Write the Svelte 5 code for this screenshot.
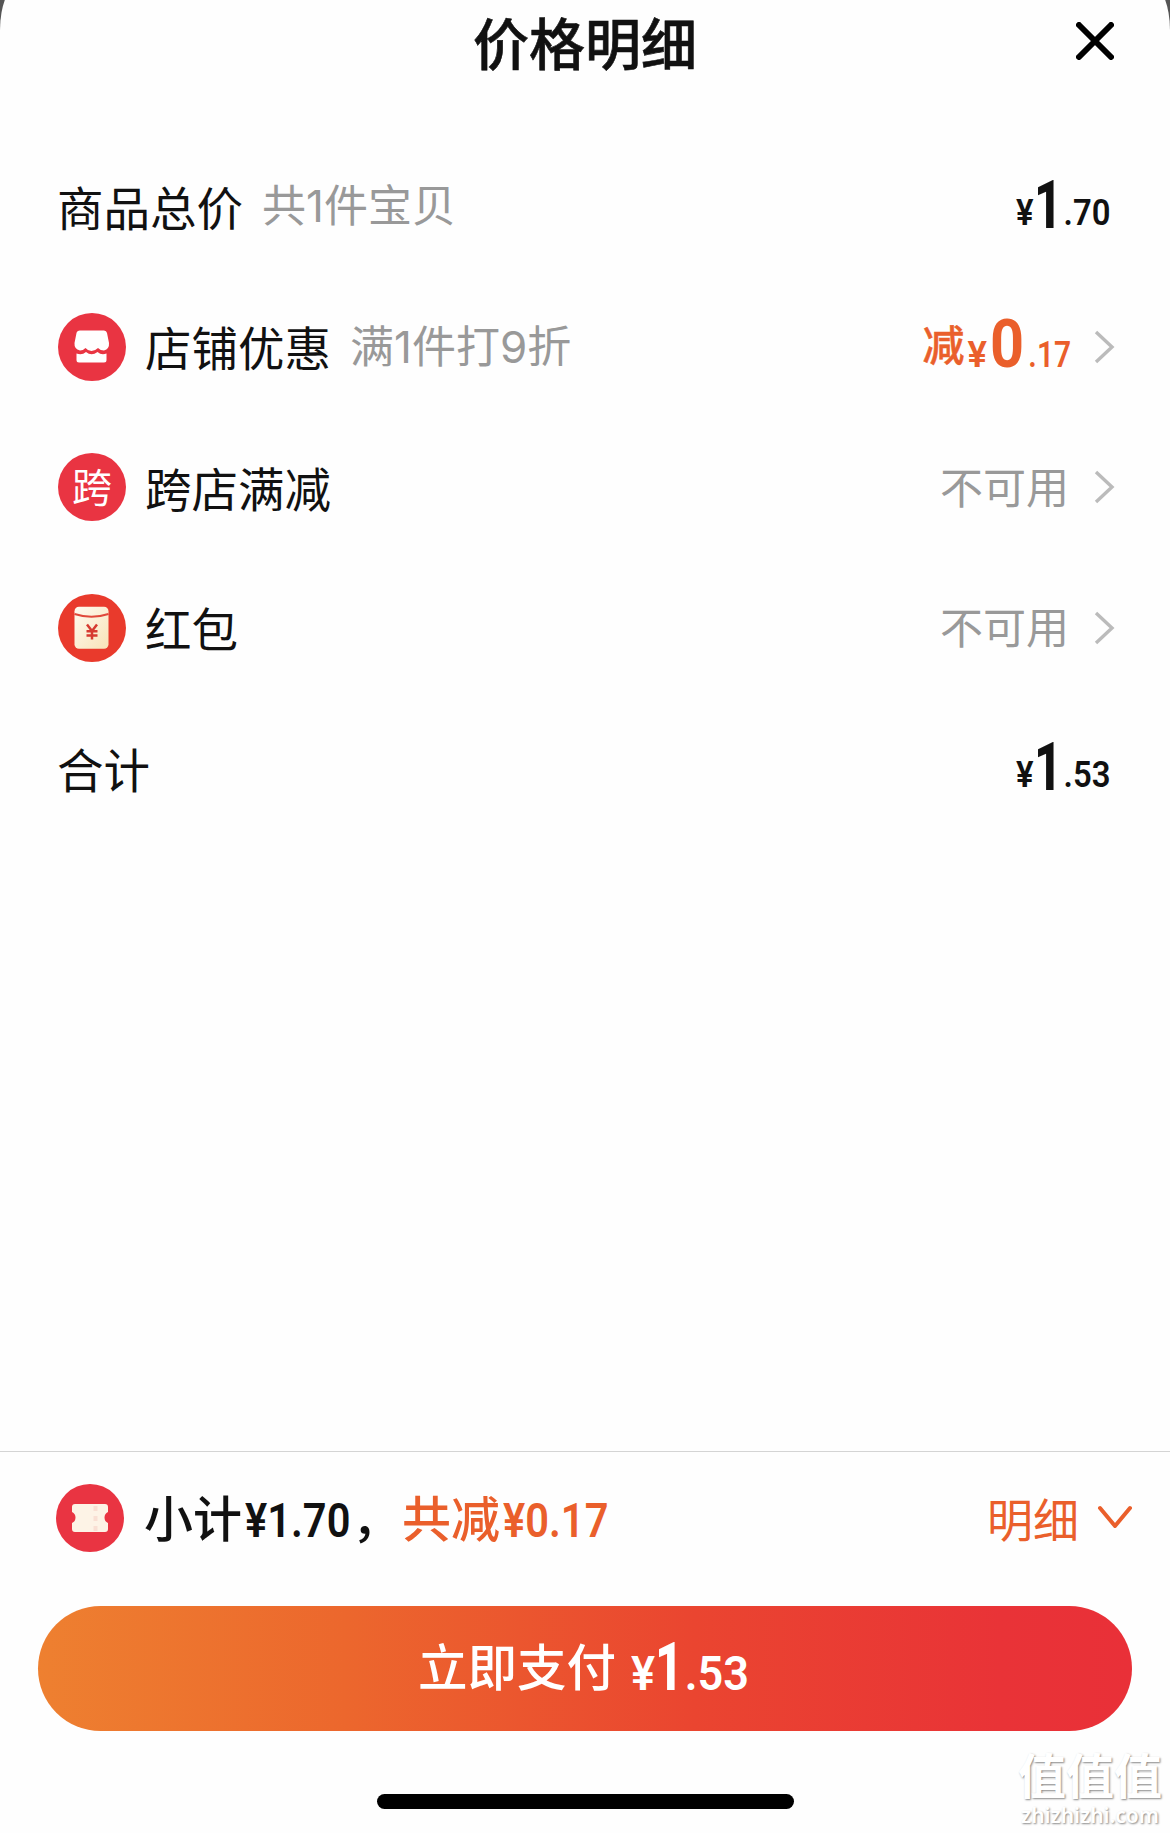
<script>
  const rows = [
    { label: '商品总价', note: '共1件宝贝', int: '1', dec: '.70' },
    { icon: 'shop', label: '店铺优惠', note: '满1件打9折', off: true, int: '0', dec: '.17' },
    { icon: 'cross', label: '跨店满减', status: '不可用' },
    { icon: 'packet', label: '红包', status: '不可用' },
    { label: '合计', int: '1', dec: '.53' },
  ]
</script>

{#snippet price(int, dec)}
  <span class="price">
    <span class="yen">¥</span>
    <span class="int" class:narrow={int === '1'}>{int}</span>
    <span class="dec">{dec}</span>
  </span>
{/snippet}

{#snippet icon(name)}
  <svg class="icon" viewBox="0 0 68 68">
    <defs>
      <linearGradient id="cream" x1="0" y1="0" x2="1" y2="1">
        <stop offset="0" stop-color="#fffaf0" />
        <stop offset="1" stop-color="#f8e3b8" />
      </linearGradient>
    </defs>
    <circle cx="34" cy="34" r="34" fill={name === 'packet' ? '#e93a2c' : '#e93442'} />
    {#if name === 'shop'}
      <path d="M22 17.500H46Q48.500 17.500 49 20L51 30Q51.500 36 46 37.500Q42.500 37.500 40 35Q37 38 33.500 38Q30 38 27.500 35Q25 37.500 22 37.500Q16 36 16.500 30L18.500 20Q19 17.500 22 17.500Z" fill="#fff" />
      <path d="M18.500 40.500Q24 42.500 28 39Q33.500 43.500 39.500 39Q43.500 42.500 48.500 40.500V47Q48.500 49.500 46 49.500H21Q18.500 49.500 18.500 47Z" fill="#fff" />
    {:else if name === 'cross'}
      <text class="glyph" x="34" y="48.500" text-anchor="middle">跨</text>
    {:else if name === 'packet'}
      <rect x="16.500" y="12.700" width="34" height="42" rx="4.500" fill="url(#cream)" />
      <path d="M16.500 20Q33.500 25.500 50.500 20" fill="none" stroke="#e0483a" stroke-width="2" />
      <path d="M29 30.500L34 37L39 30.500M34 37V45.500M28.500 37.300H39.500M28.500 41.500H39.500" fill="none" stroke="#d63a30" stroke-width="2.500" />
    {:else}
      <path d="M19 20H49Q52 20 52 23V28Q48.500 29.500 48.500 33.500Q48.500 37.500 52 39V45Q52 48 49 48H19Q16 48 16 45V39Q19.500 37.500 19.500 33.500Q19.500 29.500 16 28V23Q16 20 19 20Z" fill="#fdf3e6" />
      <path d="M39.500 22V47" stroke="#f9dfd3" stroke-width="4" stroke-dasharray="5 5" />
    {/if}
  </svg>
{/snippet}

<div class="page">
  <div class="sheet">
    <header>
      <h1>价格明细</h1>
      <button class="close" aria-label="关闭">
        <svg width="38" height="38" viewBox="0 0 38 38">
          <path d="M3 3L35 35M35 3L3 35" stroke="#000" stroke-width="6" stroke-linecap="round" />
        </svg>
      </button>
    </header>

    <ul>
      {#each rows as row}
        <li class:linked={row.icon}>
          {#if row.icon}
            {@render icon(row.icon)}
          {/if}
          <span class="label">{row.label}</span>
          {#if row.note}
            <span class="note">{row.note}</span>
          {/if}
          <div class="value" class:off={row.off}>
            {#if row.off}
              <span class="minus">减</span>
            {/if}
            {#if row.int}
              {@render price(row.int, row.dec)}
            {/if}
            {#if row.status}
              <span class="status">{row.status}</span>
            {/if}
          </div>
          {#if row.icon}
            <svg class="arrow" width="22" height="36" viewBox="0 0 22 36">
              <path d="M3 3L19 18L3 33" fill="none" stroke="#bbb" stroke-width="3.400" />
            </svg>
          {/if}
        </li>
      {/each}
    </ul>

    <footer>
      <div class="summary">
        {@render icon('ticket')}
        <span class="subtotal">小计<b>¥1.70</b>，</span>
        <span class="saved">共减<b>¥0.17</b></span>
        <span class="detail">明细</span>
        <svg width="36" height="26" viewBox="0 0 36 26">
          <path d="M3 3L18 21L33 3" fill="none" stroke="#ea5f2b" stroke-width="4" stroke-linecap="round" stroke-linejoin="round" />
        </svg>
      </div>
      <button class="pay">
        <span class="pay-label">立即支付</span>
        {@render price('1', '.53')}
      </button>
      <div class="home-bar"></div>
    </footer>
  </div>

  <div class="watermark">
    <div class="brand">值值值</div>
    <div class="site">zhizhizhi.com</div>
  </div>
</div>

<style>
  :global(body) {
    background: #555;
  }

  .page {
    position: relative;
    height: 1833px;
    overflow: hidden;
    background: #555;
    color: #111;
    font-family: 'Noto Sans CJK SC', sans-serif;
    line-height: 1;
  }

  .sheet {
    display: flex;
    flex-direction: column;
    box-sizing: border-box;
    height: 1849px;
    margin-top: -16px;
    padding-top: 16px;
    background: #fefefe;
    border-radius: 20px 20px 0 0 / 46px 46px 0 0;
  }

  header {
    position: relative;
    height: 136px;
  }

  h1 {
    margin: 0;
    padding-top: 13px;
    font-size: 56px;
    font-weight: 500;
    text-align: center;
    -webkit-text-stroke: 0.6px #111;
  }

  button {
    border: none;
    padding: 0;
    font-family: inherit;
    cursor: pointer;
  }

  .close {
    position: absolute;
    top: 22px;
    right: 56px;
    height: 38px;
    background: none;
  }

  svg {
    display: block;
    flex: none;
  }

  ul {
    flex: 1;
    margin: 0;
    padding: 0;
    list-style: none;
  }

  li {
    display: flex;
    align-items: center;
    height: 140.500px;
    padding: 0 57px;
  }

  .linked {
    padding-right: 55px;
  }

  .icon {
    width: 68px;
    height: 68px;
    margin: 0 19px 0 1px;
  }

  .glyph {
    fill: #fff;
    font-size: 40px;
  }

  .label {
    padding-bottom: 1px;
    font-size: 46.500px;
  }

  .note {
    margin-left: 19px;
    color: #999;
    font-family: Inter, 'Noto Sans CJK SC', sans-serif;
    font-size: 44px;
  }

  .value {
    display: flex;
    align-items: center;
    margin-left: auto;
  }

  .off {
    margin-right: -2px;
    padding-bottom: 4px;
    color: #ea5f2b;
  }

  .minus {
    padding-bottom: 3px;
    margin-right: 3px;
    font-size: 42px;
    font-weight: 500;
    -webkit-text-stroke: 0.5px #ea5f2b;
  }

  .status {
    padding-bottom: 4px;
    color: #999;
    font-size: 43px;
  }

  .arrow {
    margin-left: 24px;
  }

  .price {
    display: flex;
    align-items: baseline;
    font-family: Roboto, sans-serif;
    font-size: 36.500px;
    font-weight: 600;
  }

  .price span {
    display: block;
    transform: translateY(-3px) scaleX(0.9);
  }

  .price .int {
    margin: 0 -7px 0 1px;
    font-size: 66px;
    font-weight: 700;
    transform: scaleX(0.9);
  }

  .price .narrow {
    margin: 0 -6px 0 -6px;
    font-weight: 800;
    transform: scaleX(0.74);
  }

  .off .yen {
    transform: scaleX(1);
  }

  .off .dec {
    transform: scaleX(0.82);
    transform-origin: right;
  }

  footer {
    height: 382px;
    box-sizing: border-box;
    border-top: 1px solid #d4d4d4;
  }

  .summary {
    display: flex;
    align-items: center;
    height: 132px;
    padding: 0 37px 0 55px;
    font-size: 49px;
    font-weight: 500;
  }

  .summary .icon {
    margin-right: 20px;
  }

  .summary b {
    display: inline-block;
    margin: 0 -17px 0 3px;
    font-family: Roboto, sans-serif;
    font-weight: 600;
    transform: scaleX(0.85);
    transform-origin: left;
  }

  .saved {
    margin-left: 1px;
    color: #ea5f2b;
  }

  .detail {
    margin: 0 18px 0 auto;
    padding-bottom: 3px;
    color: #ea5f2b;
    font-size: 46px;
    font-weight: 400;
  }

  .pay {
    display: flex;
    align-items: center;
    justify-content: center;
    width: 1094px;
    height: 125px;
    margin: 22px auto 0;
    border-radius: 63px;
    background: linear-gradient(90deg, #ee8030, #ec672d 28%, #ea4530 60%, #e93337 88%, #e93038);
    color: #fff;
    font-size: 49.500px;
    font-weight: 500;
  }

  .pay-label {
    padding-bottom: 9px;
  }

  .pay .price {
    margin-left: 14px;
    padding-bottom: 3px;
    font-size: 49px;
  }

  .pay .yen,
  .pay .dec {
    transform: scaleX(0.92);
  }

  .home-bar {
    width: 417px;
    height: 15px;
    margin: 63px auto 0;
    border-radius: 8px;
    background: #000;
  }

  .watermark {
    position: absolute;
    right: 8px;
    bottom: 7px;
    color: #fff;
    text-align: center;
    text-shadow: 1px 1px 2px #888;
  }

  .brand {
    margin-bottom: 8px;
    font-size: 48px;
    font-weight: 700;
  }

  .site {
    font-family: 'Noto Sans', sans-serif;
    font-size: 21px;
    font-weight: 600;
  }
</style>
